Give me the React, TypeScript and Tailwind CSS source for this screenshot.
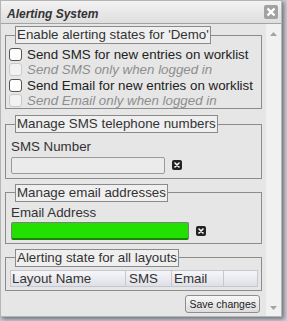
import React from 'react'

const font = "font-['Liberation_Sans',Arial,sans-serif]"

function Legend({ children }: { children: React.ReactNode }) {
  return (
    <legend className="ml-[9px] px-[1px] border border-[#8a8a8a] bg-[#efefef] text-[13.33px] leading-[16px] text-[#333]">
      {children}
    </legend>
  )
}

function Check({ label, disabled }: { label: string; disabled?: boolean }) {
  return (
    <label className="flex items-center gap-[5px] h-[15.33px] leading-[15.33px]">
      <input
        type="checkbox"
        disabled={disabled}
        className={
          disabled
            ? 'appearance-none w-[13px] h-[13px] rounded-[3px] border border-[#c9c9c9] bg-[#f2f2f2] shrink-0'
            : 'appearance-none w-[13px] h-[13px] rounded-[3px] border border-[#555] bg-white shrink-0'
        }
      />
      <span className={disabled ? 'italic text-[#8e8e8e]' : 'text-[#222]'}>{label}</span>
    </label>
  )
}

function ClearIcon() {
  return (
    <svg width="10" height="10" viewBox="0 0 10 10" className="shrink-0">
      <rect x="0" y="0" width="10" height="10" rx="2" fill="#222" />
      <path d="M3 3 L7 7 M7 3 L3 7" stroke="#fff" strokeWidth="1.6" strokeLinecap="round" />
    </svg>
  )
}

export default function App() {
  return (
    <div className={`w-[287px] h-[321px] bg-[#c8cdd6] overflow-hidden ${font}`}>
      <div className="w-[282px] h-[317px] flex flex-col bg-[#e6e6e6] border border-[#b5b5b5] shadow-[2px_2px_4px_rgba(0,0,0,0.45)]">
        {/* title bar */}
        <div className="h-[23px] shrink-0 flex justify-between border-b border-[#a3a3a3] bg-gradient-to-b from-[#f3f3f3] to-[#dedede]">
          <div className="pl-[6px] pt-[6px] text-[12px] leading-[14px] font-bold italic text-[#333]">Alerting System</div>
          <div className="mt-[4px] mr-[3px] w-[14px] h-[14px] rounded-[2px] bg-[#a2a2a2] flex items-center justify-center">
            <svg width="10" height="10" viewBox="0 0 10 10">
              <path d="M1.5 1.5 L8.5 8.5 M8.5 1.5 L1.5 8.5" stroke="#fff" strokeWidth="2.4" />
            </svg>
          </div>
        </div>

        <div className="flex flex-1 min-h-0">
          <div className="flex-1 px-[4px] pt-[2px] text-[13.33px] text-[#222]">
            <fieldset className="border border-[#8c8c8c] p-0">
              <Legend>Enable alerting states for 'Demo'</Legend>
              <div className="pl-[3px] pt-[3px]">
                <Check label="Send SMS for new entries on worklist" />
                <Check label="Send SMS only when logged in" disabled />
                <Check label="Send Email for new entries on worklist" />
                <Check label="Send Email only when logged in" disabled />
              </div>
            </fieldset>

            <fieldset className="mt-[6px] border border-[#8c8c8c] p-0 pb-[4px]">
              <Legend>Manage SMS telephone numbers</Legend>
              <div className="pl-[5px]">
                <div className="pt-[6px] leading-[15.33px] text-[#333]">SMS Number</div>
                <div className="mt-[2px] flex items-center gap-[7px]">
                  <input className="w-[154px] h-[17px] rounded-[2px] border border-[#9a9a9a] bg-[#ebebeb] outline-none" />
                  <ClearIcon />
                </div>
              </div>
            </fieldset>

            <fieldset className="mt-[5px] border border-[#8c8c8c] p-0 pb-[3px]">
              <Legend>Manage email addresses</Legend>
              <div className="pl-[5px]">
                <div className="pt-[3px] leading-[15.33px] text-[#333]">Email Address</div>
                <div className="mt-[2px] flex items-center gap-[7px]">
                  <input className="w-[178px] h-[18px] rounded-[2px] border border-[#7d7d7d] border-b-2 border-b-[#1a8400] bg-[#22e000] outline-none" />
                  <ClearIcon />
                </div>
              </div>
            </fieldset>

            <fieldset className="mt-[5px] border border-[#8c8c8c] p-0 pb-[3px]">
              <Legend>Alerting state for all layouts</Legend>
              <div className="ml-[4px] mr-[3px] mt-[3px] h-[17px] flex border border-[#c6c7cf] bg-gradient-to-b from-[#f6f6fa] to-[#dfe0e7] leading-[15px] text-[#333]">
                <div className="w-[115px] pl-[1px] border-r border-[#c6c7cf]">Layout Name</div>
                <div className="w-[46px] pl-[3px] border-r border-[#c6c7cf]">SMS</div>
                <div className="w-[52px] pl-[2px] border-r border-[#c6c7cf]">Email</div>
                <div className="flex-1" />
              </div>
            </fieldset>

            <div className="mt-[4px] flex justify-end pr-[2px]">
              <button className="h-[18px] px-[3px] rounded-[3px] border border-[#8e8e8e] bg-gradient-to-b from-[#f7f7f7] to-[#dcdcdc] text-[10.5px] leading-[14px] text-[#222]">
                Save changes
              </button>
            </div>
          </div>

          {/* scrollbar */}
          <div className="w-[15px] shrink-0 bg-[#f1f1f1] flex flex-col items-center justify-between pt-[8px] pb-[6px]">
            <svg width="7" height="4" viewBox="0 0 7 4"><path d="M0 4 L3.5 0 L7 4 Z" fill="#a3a3a3" /></svg>
            <svg width="7" height="4" viewBox="0 0 7 4"><path d="M0 0 L3.5 4 L7 0 Z" fill="#a3a3a3" /></svg>
          </div>
        </div>
      </div>
    </div>
  )
}
